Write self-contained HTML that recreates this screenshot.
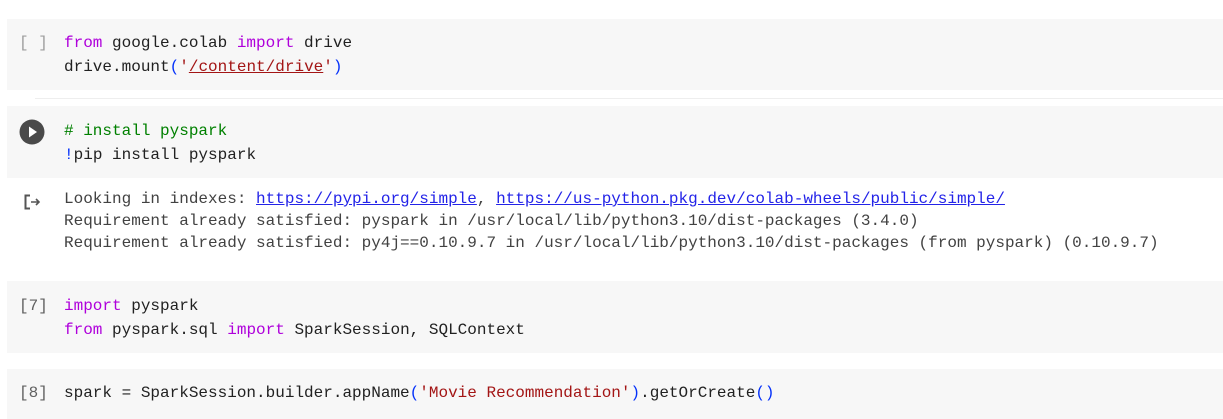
<!DOCTYPE html>
<html><head><style>
body{margin:0;width:1223px;height:419px;background:#fff;position:relative;overflow:hidden;font-family:"Liberation Mono",monospace;font-size:16px;}
.cell{position:absolute;left:7px;right:0;background:#f7f7f7;}
.l{position:absolute;left:64px;white-space:pre;color:#212121;}
.o{position:absolute;left:64px;white-space:pre;color:#424242;}
.k{color:#af00db}.s{color:#a31515}.p{color:#0431fa}.c{color:#008000}
.n{position:absolute;left:19px;white-space:pre;color:#616161;}
a{text-decoration:underline;color:#2323e8}
</style></head><body>
<div class="cell" style="top:19px;height:71px"></div>
<div class="cell" style="top:106px;height:72px"></div>
<div class="cell" style="top:281px;height:72px"></div>
<div class="cell" style="top:369px;height:50px"></div>
<div style="position:absolute;left:35px;top:98px;width:1188px;height:1px;background:#eee"></div>

<div class="n" style="top:34px;color:#9e9e9e">[ ]</div>
<div class="l" style="top:34px"><span class="k">from</span> google.colab <span class="k">import</span> drive</div>
<div class="l" style="top:58px">drive.mount<span class="p">(</span><span class="s">'<span style="text-decoration:underline">/content/drive</span>'</span><span class="p">)</span></div>

<svg style="position:absolute;left:19px;top:119px" width="26" height="26"><circle cx="13" cy="13" r="12.5" fill="#4a4a4a"/><path d="M10 7.5 L18 13 L10 18.5Z" fill="#fff"/></svg>
<div class="l" style="top:122px"><span class="c"># install pyspark</span></div>
<div class="l" style="top:146px"><span class="p">!</span>pip install pyspark</div>

<svg style="position:absolute;left:24px;top:194px" width="20" height="16"><path d="M6 1.5H1.5V14.5H6" fill="none" stroke="#555" stroke-width="2"/><path d="M7 8H15M12 5L15 8L12 11" fill="none" stroke="#555" stroke-width="1.6"/></svg>
<div class="o" style="top:190px">Looking in indexes: <a>https://pypi.org/simple</a>, <a>https://us-python.pkg.dev/colab-wheels/public/simple/</a></div>
<div class="o" style="top:212px">Requirement already satisfied: pyspark in /usr/local/lib/python3.10/dist-packages (3.4.0)</div>
<div class="o" style="top:234px">Requirement already satisfied: py4j==0.10.9.7 in /usr/local/lib/python3.10/dist-packages (from pyspark) (0.10.9.7)</div>

<div class="n" style="top:297px">[7]</div>
<div class="l" style="top:297px"><span class="k">import</span> pyspark</div>
<div class="l" style="top:321px"><span class="k">from</span> pyspark.sql <span class="k">import</span> SparkSession, SQLContext</div>

<div class="n" style="top:384px">[8]</div>
<div class="l" style="top:384px">spark = SparkSession.builder.appName<span class="p">(</span><span class="s">'Movie Recommendation'</span><span class="p">)</span>.getOrCreate<span class="p">()</span></div>
</body></html>
